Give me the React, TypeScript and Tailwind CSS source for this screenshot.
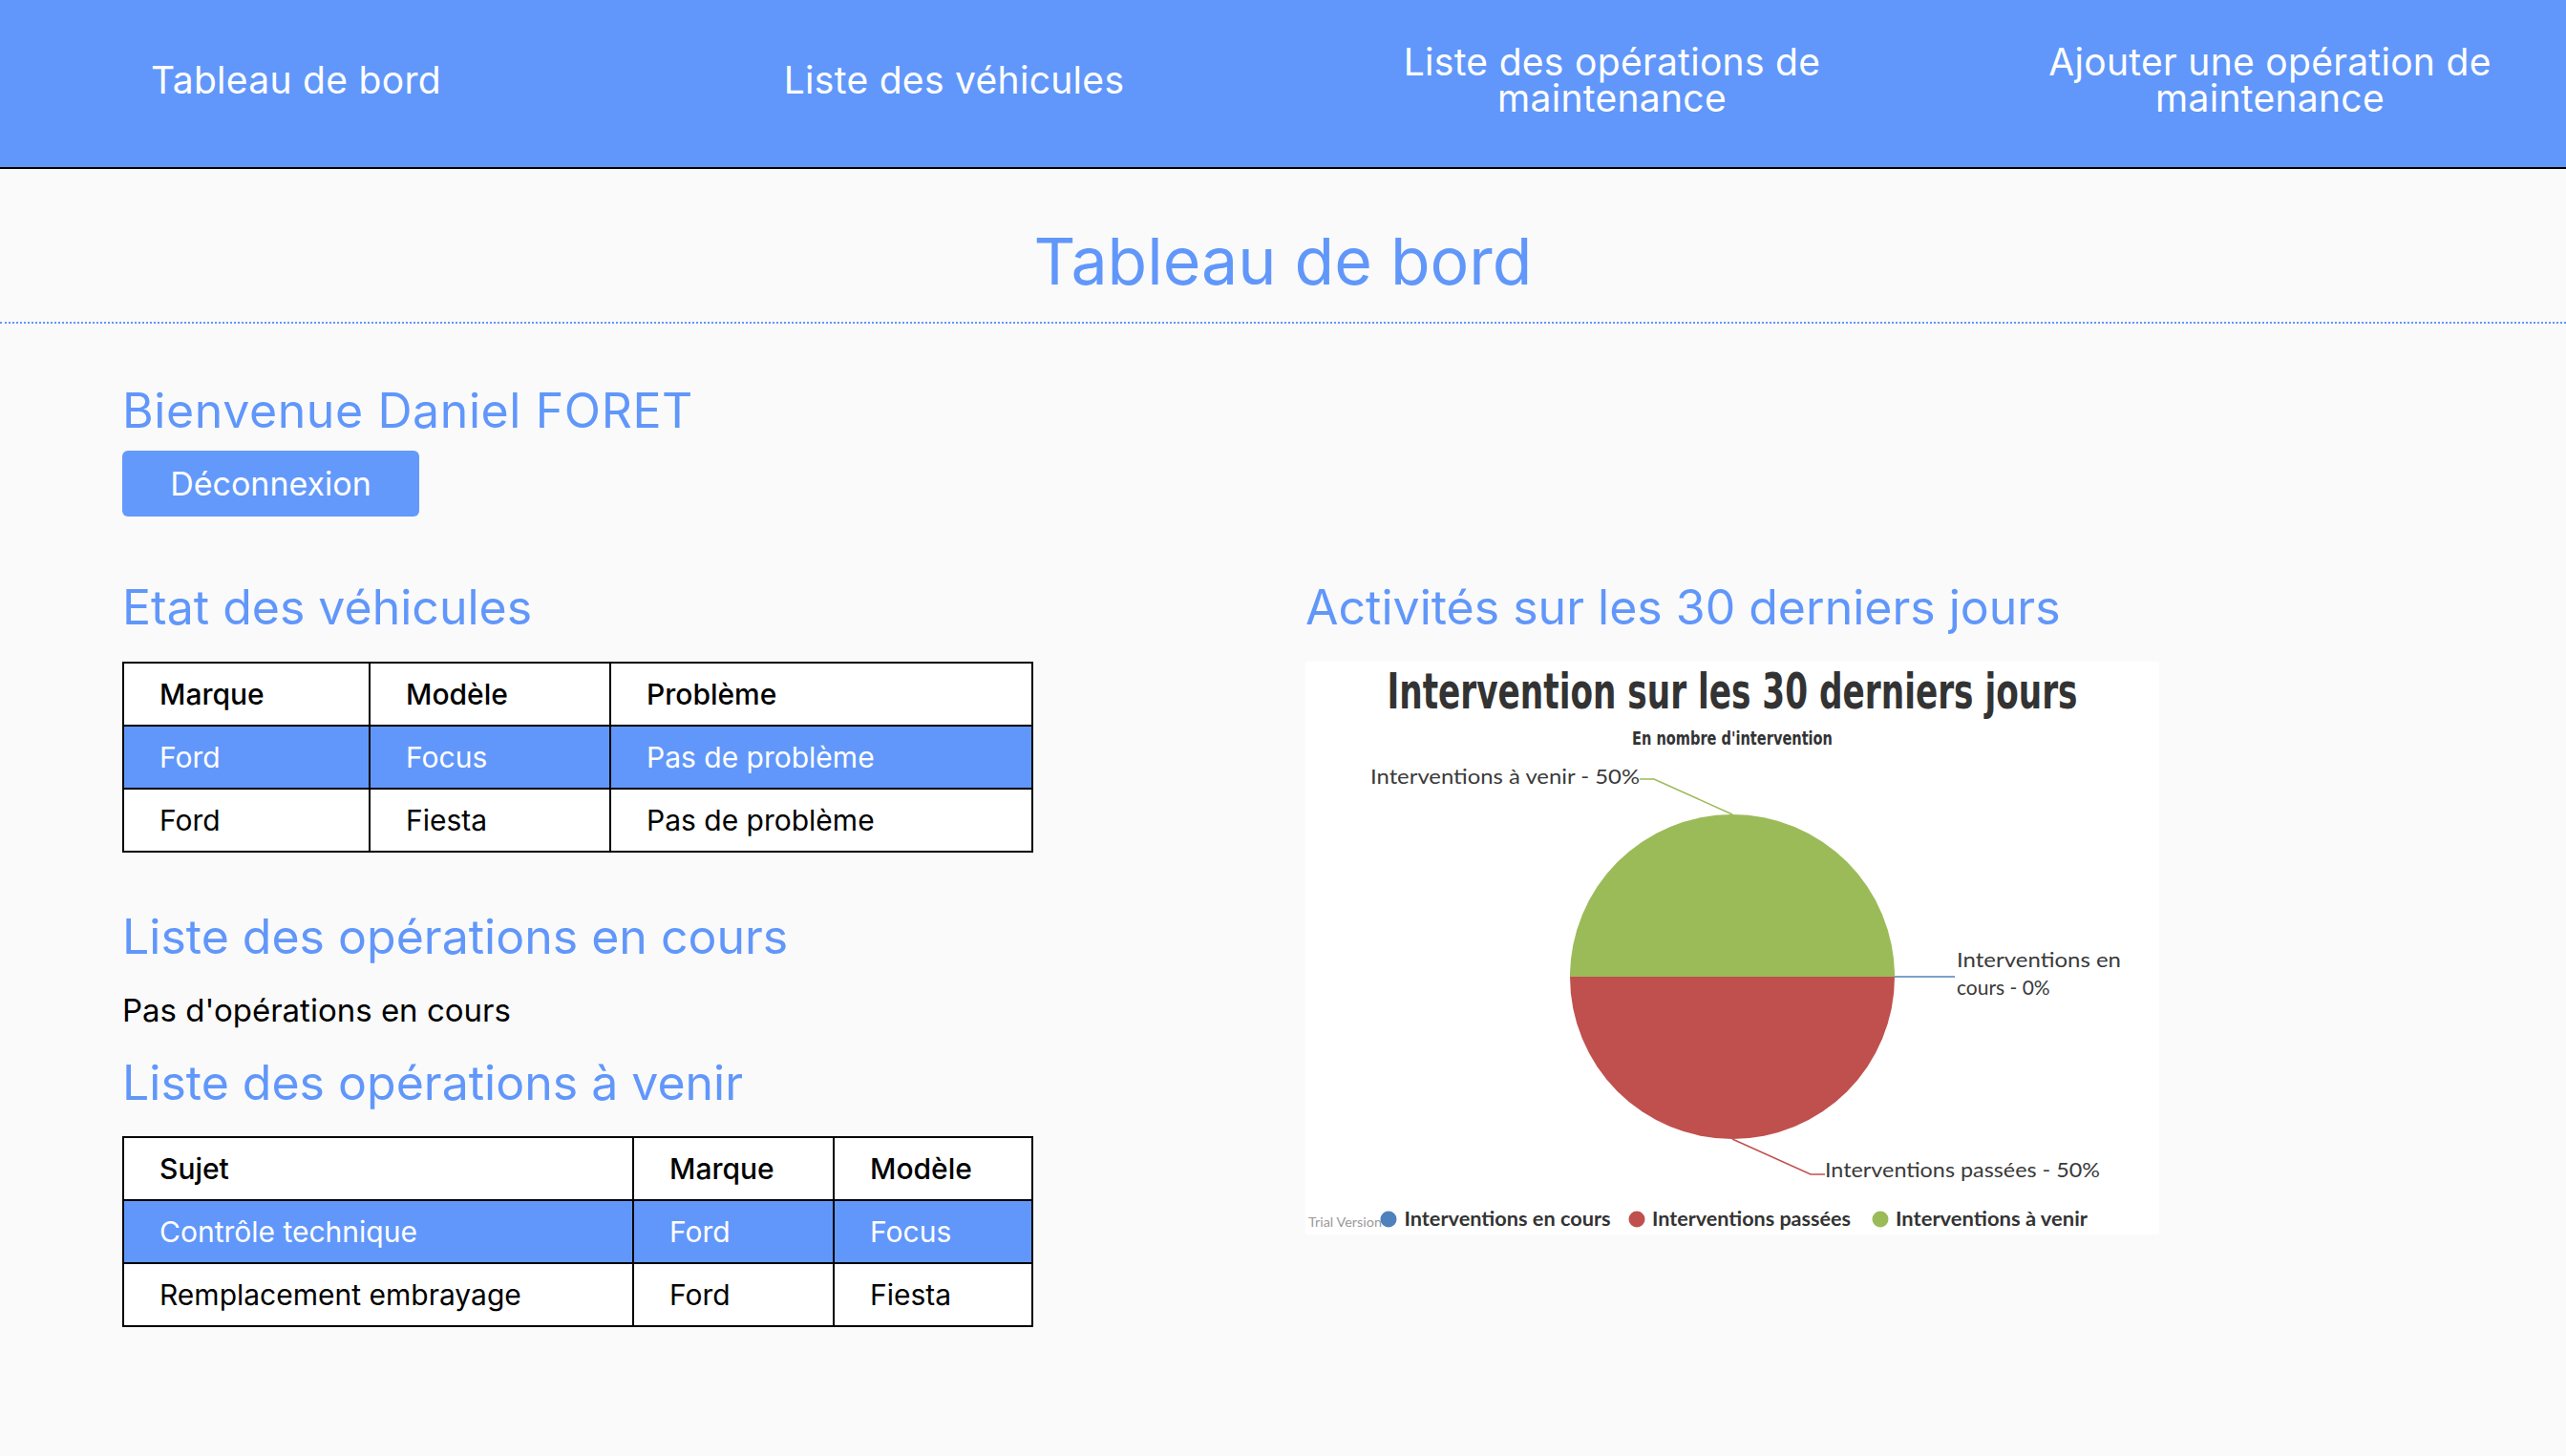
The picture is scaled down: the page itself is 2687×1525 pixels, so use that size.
import React from "react";

function Table({
  cols,
  widths,
  rows,
}: {
  cols: string[];
  widths: string[];
  rows: string[][];
}) {
  return (
    <table className="w-[952px] border-collapse border-2 border-black bg-white text-[30px] table-fixed">
      <colgroup>
        {widths.map((w, i) => (
          <col key={i} className={w} />
        ))}
      </colgroup>
      <thead>
        <tr>
          {cols.map((c) => (
            <th
              key={c}
              className="h-[66px] border-2 border-black pl-[37px] text-left font-medium leading-none text-black"
            >
              {c}
            </th>
          ))}
        </tr>
      </thead>
      <tbody>
        {rows.map((r, i) => (
          <tr key={i} className={i === 0 ? "bg-[#6197fa] text-white" : "bg-white text-black"}>
            {r.map((c, j) => (
              <td key={j} className="h-[66px] border-2 border-black pl-[37px] leading-none">
                {c}
              </td>
            ))}
          </tr>
        ))}
      </tbody>
    </table>
  );
}

function Chart() {
  const label = "Lato, 'Open Sans', sans-serif";
  const heavy = "'DejaVu Sans', sans-serif";
  return (
    <div className="h-[600px] w-[894px] bg-white">
      <svg width="894" height="600" viewBox="0 0 894 600">
        <text
          transform="translate(447 49) scale(0.6 1)"
          x="0"
          y="0"
          textAnchor="middle"
          fontFamily={heavy}
          fontWeight="bold"
          fontSize="52"
          fill="#333333"
          textLength="1205"
          lengthAdjust="spacingAndGlyphs"
        >
          Intervention sur les 30 derniers jours
        </text>
        <text
          transform="translate(447 87) scale(0.6 1)"
          x="0"
          y="0"
          textAnchor="middle"
          fontFamily={heavy}
          fontWeight="bold"
          fontSize="19"
          fill="#333333"
          textLength="350"
          lengthAdjust="spacingAndGlyphs"
        >
          En nombre d'intervention
        </text>

        <path d="M 277 330 A 170 170 0 0 1 617 330 Z" fill="#9bbb59" />
        <path d="M 617 330 A 170 170 0 0 1 277 330 Z" fill="#c0504d" />

        <polyline points="350,123 365,123 447,160" fill="none" stroke="#9bbb59" strokeWidth="1.5" />
        <polyline points="617,330 680,330" fill="none" stroke="#4f81bd" strokeWidth="1.5" />
        <polyline points="447,500 529,537 544,537" fill="none" stroke="#c0504d" strokeWidth="1.5" />

        <text x="68" y="128" fontFamily={label} fontSize="21" fill="#3a3a3a" textLength="282" lengthAdjust="spacingAndGlyphs">
          Interventions à venir - 50%
        </text>
        <text x="682" y="320" fontFamily={label} fontSize="21" fill="#3a3a3a" textLength="172" lengthAdjust="spacingAndGlyphs">
          Interventions en
        </text>
        <text x="682" y="349" fontFamily={label} fontSize="21" fill="#3a3a3a">
          cours - 0%
        </text>
        <text x="544" y="540" fontFamily={label} fontSize="21" fill="#3a3a3a" textLength="288" lengthAdjust="spacingAndGlyphs">
          Interventions passées - 50%
        </text>

        <text x="3" y="592" fontFamily={label} fontSize="13" fill="#9a9a9a" textLength="77" lengthAdjust="spacingAndGlyphs">
          Trial Version
        </text>
        <circle cx="87" cy="584" r="8.5" fill="#4f81bd" />
        <text x="103.5" y="591" fontFamily={label} fontWeight="bold" fontSize="20" fill="#333333" textLength="216" lengthAdjust="spacingAndGlyphs">
          Interventions en cours
        </text>
        <circle cx="347" cy="584" r="8.5" fill="#c0504d" />
        <text x="363" y="591" fontFamily={label} fontWeight="bold" fontSize="20" fill="#333333" textLength="208" lengthAdjust="spacingAndGlyphs">
          Interventions passées
        </text>
        <circle cx="602" cy="584" r="8.5" fill="#9bbb59" />
        <text x="618" y="591" fontFamily={label} fontWeight="bold" fontSize="20" fill="#333333" textLength="201" lengthAdjust="spacingAndGlyphs">
          Interventions à venir
        </text>
      </svg>
    </div>
  );
}

export default function App() {
  return (
    <div className="min-h-screen bg-[#fafafa] [font-family:Inter,'DejaVu_Sans',sans-serif]">
      <nav className="flex h-[177px] items-center justify-center overflow-hidden border-b-2 border-black bg-[#6197fa] pb-2 text-[39px] leading-[38px] text-white">
        <a className="w-[689px] shrink-0 text-center tracking-[0.3px]">Tableau de bord</a>
        <a className="w-[689px] shrink-0 text-center tracking-[0.3px]">Liste des véhicules</a>
        <a className="w-[689px] shrink-0 text-center tracking-[0.3px]">
          <span className="block">Liste des opérations de</span>
          <span className="block">maintenance</span>
        </a>
        <a className="w-[689px] shrink-0 text-center tracking-[0.3px]">
          <span className="block">Ajouter une opération de</span>
          <span className="block">maintenance</span>
        </a>
      </nav>

      <h1 className="border-b-2 border-dotted border-[#6197fa] pt-[62px] pb-[30px] text-center text-[68px] font-normal leading-[68px] text-[#6197fa]">
        Tableau de bord
      </h1>

      <main className="px-[128px] pb-[100px]">
        <h2 className="mt-[66px] text-[50px] leading-[50px] tracking-[0.6px] text-[#6197fa]">Bienvenue Daniel FORET</h2>
        <button className="mt-[17px] h-[69px] w-[311px] rounded-[6px] bg-[#6399fb] text-[34px] text-white">
          Déconnexion
        </button>

        <div className="mt-[70px] grid grid-cols-2 gap-x-[47px]">
          <div>
            <h2 className="text-[50px] leading-[50px] text-[#6197fa]">Etat des véhicules</h2>
            <div className="mt-[32px]">
              <Table
                cols={["Marque", "Modèle", "Problème"]}
                widths={["w-[258px]", "w-[252px]", "w-[442px]"]}
                rows={[
                  ["Ford", "Focus", "Pas de problème"],
                  ["Ford", "Fiesta", "Pas de problème"],
                ]}
              />
            </div>
            <h2 className="mt-[63px] text-[50px] leading-[50px] text-[#6197fa]">Liste des opérations en cours</h2>
            <p className="mt-[37px] text-[33px] leading-[31px] text-black">Pas d'opérations en cours</p>
            <h2 className="mt-[35px] text-[50px] leading-[50px] text-[#6197fa]">Liste des opérations à venir</h2>
            <div className="mt-[31px]">
              <Table
                cols={["Sujet", "Marque", "Modèle"]}
                widths={["w-[534px]", "w-[210px]", "w-[208px]"]}
                rows={[
                  ["Contrôle technique", "Ford", "Focus"],
                  ["Remplacement embrayage", "Ford", "Fiesta"],
                ]}
              />
            </div>
          </div>
          <div>
            <h2 className="text-[50px] leading-[50px] text-[#6197fa]">Activités sur les 30 derniers jours</h2>
            <div className="mt-[32px]">
              <Chart />
            </div>
          </div>
        </div>
      </main>
    </div>
  );
}
